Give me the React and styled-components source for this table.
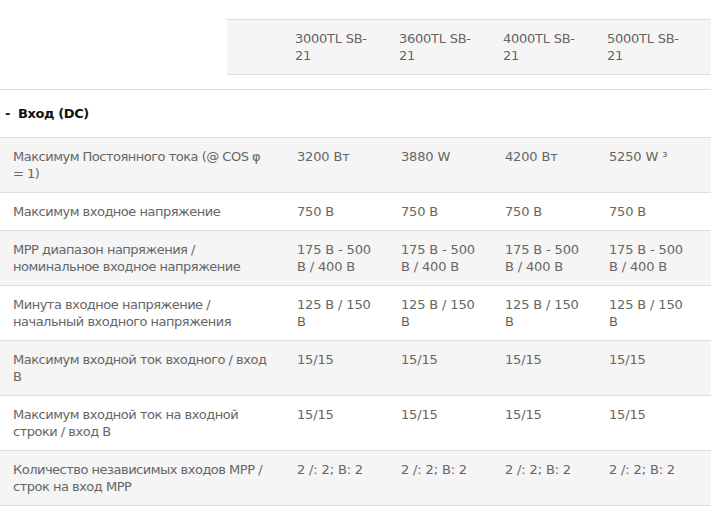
import React from 'react'
import styled, { createGlobalStyle } from 'styled-components'

const GlobalStyle = createGlobalStyle`
  html, body {
    margin: 0;
    padding: 0;
    background: #fff;
  }
  body {
    font-family: "DejaVu Sans", Verdana, sans-serif;
    font-size: 13px;
    line-height: 17px;
    color: #666;
  }
`

const models = ['3000TL SB-21', '3600TL SB-21', '4000TL SB-21', '5000TL SB-21']

const specs = [
  {
    label: 'Максимум Постоянного тока (@ COS φ = 1)',
    values: ['3200 Вт', '3880 W', '4200 Вт', '5250 W ³']
  },
  {
    label: 'Максимум входное напряжение',
    values: ['750 В', '750 В', '750 В', '750 В']
  },
  {
    label: 'MPP диапазон напряжения / номинальное входное напряжение',
    values: ['175 В - 500 В / 400 В', '175 В - 500 В / 400 В', '175 В - 500 В / 400 В', '175 В - 500 В / 400 В']
  },
  {
    label: 'Минута входное напряжение / начальный входного напряжения',
    values: ['125 В / 150 В', '125 В / 150 В', '125 В / 150 В', '125 В / 150 В']
  },
  {
    label: 'Максимум входной ток входного / вход В',
    values: ['15/15', '15/15', '15/15', '15/15']
  },
  {
    label: 'Максимум входной ток на входной строки / вход В',
    values: ['15/15', '15/15', '15/15', '15/15']
  },
  {
    label: 'Количество независимых входов MPP / строк на вход MPP',
    values: ['2 /: 2; B: 2', '2 /: 2; B: 2', '2 /: 2; B: 2', '2 /: 2; B: 2']
  }
]

export default function App() {
  return (
    <Page>
      <GlobalStyle />
      <HeadRow>
        <HeadCell />
        {models.map(m => <HeadCell key={m}>{m}</HeadCell>)}
        <HeadCell />
      </HeadRow>

      <Section>
        <Dash>-</Dash>Вход (DC)
      </Section>

      {specs.map((s, i) => (
        <SpecRow key={s.label} $shade={i % 2 === 0}>
          <LabelCell>{s.label}</LabelCell>
          {s.values.map((v, j) => <ValueCell key={j}>{v}</ValueCell>)}
          <ValueCell />
        </SpecRow>
      ))}
    </Page>
  )
}

const Page = styled.div`
  width: 711px;
  padding-top: 19px;
`

const HeadRow = styled.div`
  display: grid;
  grid-template-columns: 58px repeat(4, 104px) 1fr;
  margin-left: 227px;
  background: #f5f5f5;
  border-top: 1px solid #ddd;
  border-bottom: 1px solid #ddd;
`

const HeadCell = styled.div`
  padding: 10px;
  min-width: 0;
  letter-spacing: -0.25px;
`

const Section = styled.div`
  margin-top: 14px;
  border-top: 1px solid #ddd;
  padding: 15px 5px;
  font-weight: bold;
  color: #111;
  letter-spacing: -0.4px;
`

const Dash = styled.span`
  margin-right: 8px;
`

const SpecRow = styled.div`
  display: grid;
  grid-template-columns: 287px repeat(4, 104px) 1fr;
  background: ${p => (p.$shade ? '#f5f5f5' : '#fff')};
  border-top: 1px solid #ddd;
  &:last-child {
    border-bottom: 1px solid #ddd;
  }
`

const LabelCell = styled.div`
  padding: 10px 17px 10px 13px;
  min-width: 0;
  letter-spacing: -0.5px;
`

const ValueCell = styled.div`
  padding: 10px;
  min-width: 0;
  letter-spacing: -0.15px;
`
